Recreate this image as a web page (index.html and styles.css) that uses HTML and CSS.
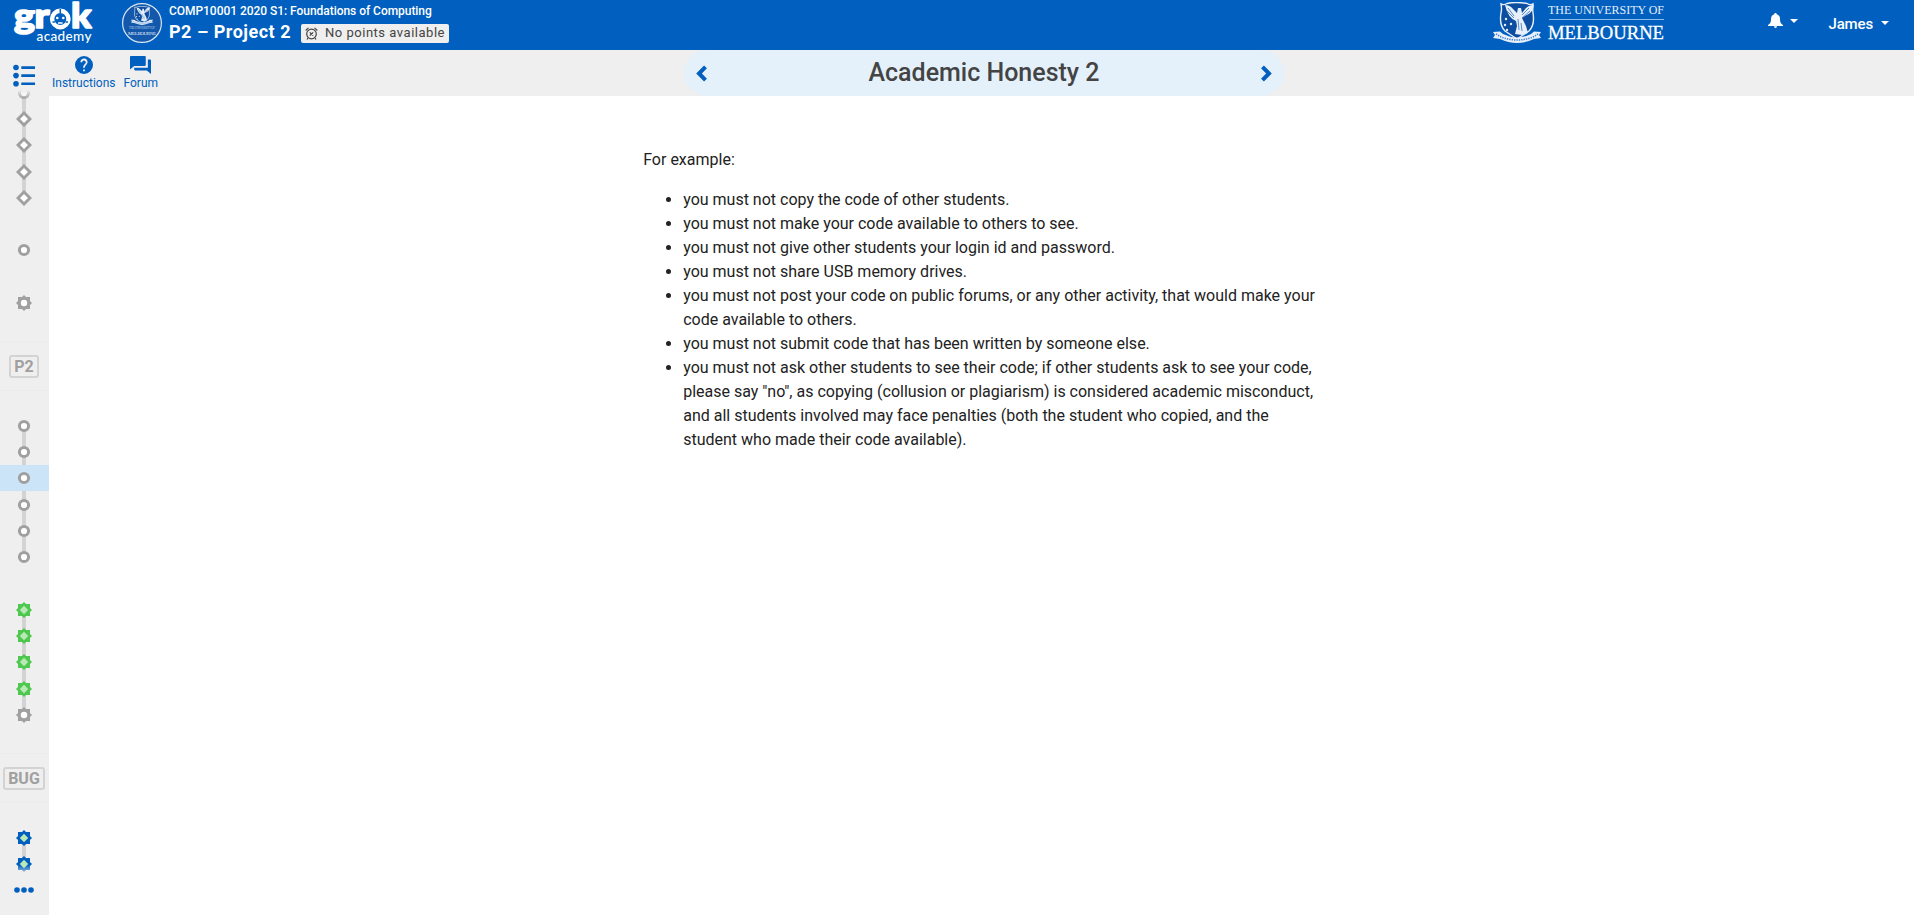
FILE: index.html
```
<!DOCTYPE html>
<html lang="en">
<head>
<meta charset="utf-8">
<title>Academic Honesty 2</title>
<link rel="stylesheet" href="styles.css">
</head>
<body>
<svg class="defs" width="0" height="0">
  <defs>
    <symbol id="circle" viewBox="-8 -8 16 16"><circle r="4.600" fill="#fff" stroke="#a0a0a0" stroke-width="3"/></symbol>
    <symbol id="diamond" viewBox="-8 -8 16 16"><path d="M0-6 6 0 0 6-6 0z" fill="#fff" stroke="#a0a0a0" stroke-width="2.900"/></symbol>
    <symbol id="gear" viewBox="-8 -8 16 16"><path d="M0-8 8 0 0 8-8 0zM-6-6H6V6H-6z" fill="#a0a0a0"/><circle r="3.200" fill="#fff"/></symbol>
    <symbol id="star" viewBox="-8 -8 16 16"><path d="M0-8 8 0 0 8-8 0zM-6-6H6V6H-6z" fill="currentColor"/><path d="M0-4.200 4.200 0 0 4.200-4.200 0z" fill="#b9e9b5"/></symbol>
    <symbol id="crest" viewBox="0 0 48 41">
      <path d="M8 2q3 1.500 6-.5 9-2 20 0 3 2 6 .5-.5 5 0 9 2 12-4 18l-12 8-12-8q-6-6-4-18 1-4 0-9z" fill="#0c4da0" stroke="#e6effa" stroke-width="1.400"/>
      <path d="M12 3q5 0 8 4l4 4 1-5 3 0 1 5 4-5q3-3 8-3-1 8-9 11l-3 2 4 8 2 7-6 2-7-1 2-8-1-5q-8-3-11-16z" fill="#e6effa"/>
      <path d="M15 6l6 8M14 9l7 7M36 6l-7 7M37 9l-8 7M25 17l1 11M28 21l1 8" stroke="#2e70bb" fill="none" stroke-width=".8"/>
      <g fill="#e6effa"><circle cx="13" cy="17" r="1.200"/><circle cx="12" cy="23" r="1.200"/><circle cx="18" cy="22" r="1.200"/><circle cx="14" cy="28" r="1.200"/></g>
      <path d="M0 30l7-.5 3 2.500q14 7 28 0l3-2.500 7 .5-2 3 2 3-7 1q-17 8-34 0l-7-1 2-3z" fill="#e6effa"/>
      <path d="M3 32l5 3q16 6 32 0l5-3" stroke="#3d7ec7" fill="none" stroke-width="1.500" stroke-dasharray="1.300 1.100"/>
    </symbol>
  </defs>
</svg>

<header class="header">
  <svg class="grok" width="90" height="46" viewBox="0 0 90 46">
    <text class="grok-word" x="4" y="28" textLength="21" lengthAdjust="spacingAndGlyphs">g</text>
    <text class="grok-word" x="24.500" y="28" textLength="15" lengthAdjust="spacingAndGlyphs">r</text>
    <text class="grok-word" x="61" y="28" textLength="20.500" lengthAdjust="spacingAndGlyphs">k</text>
    <circle cx="50.300" cy="19" r="8.200" fill="none" stroke="#fff" stroke-width="4.400"/>
    <path d="M50.300 9v4.500M42.500 22h2.500M55.500 22h2.500" stroke="#005fbf" stroke-width="1.500"/>
    <circle cx="47.300" cy="18" r="1.300" fill="#fff"/><circle cx="53.300" cy="18" r="1.300" fill="#fff"/>
    <path d="M48 23h4.600" stroke="#fff" stroke-width="1.500"/>
    <text class="grok-sub" x="26.500" y="40.500" textLength="55">academy</text>
  </svg>
  <svg class="badge" width="42" height="42" viewBox="0 0 42 42">
    <circle cx="21" cy="21" r="19.400" fill="#1358ab" stroke="#d9e6f5" stroke-width="1.200"/>
    <use href="#crest" x="10" y="4" width="22" height="19"/>
    <text x="8" y="27" textLength="26" class="badge-small">THE UNIVERSITY OF</text>
    <text x="7" y="33" textLength="28" class="badge-big">MELBOURNE</text>
  </svg>
  <div class="course">
    <div class="course-name">COMP10001 2020 S1: Foundations of Computing</div>
    <div class="course-row">
      <span class="module">P2 – Project 2</span>
      <span class="points">
        <svg width="13" height="13" viewBox="0 0 13 13" fill="none" stroke="#444" stroke-width="1.200"><circle cx="6.500" cy="7" r="4.800"/><path d="M.7 3.500 3.500.9M12.300 3.500 9.500.9M4.800 5.300l3.400 3.400M8.200 5.300 4.800 8.700M3 11l-1 1.500M10 11l1 1.500"/></svg>
        <span>No points available</span>
      </span>
    </div>
  </div>
  <svg class="unimelb" width="172" height="44" viewBox="0 0 172 44">
    <use href="#crest" x="-1" y="2" width="48" height="41"/>
    <text class="uni-small" x="54" y="14" textLength="116" lengthAdjust="spacingAndGlyphs">THE UNIVERSITY OF</text>
    <path d="M55 19.500h115" stroke="#8fbcea"/>
    <text class="uni-big" x="54" y="38.500" textLength="116" lengthAdjust="spacingAndGlyphs">MELBOURNE</text>
  </svg>
  <div class="bell">
    <svg width="15" height="15" viewBox="0 0 15 15" fill="#fff"><path d="M7.500 0c.7 0 1.200.5 1.200 1.200C11 2 12 3.600 12 6c0 3.500.8 4.800 3 6v1H0v-1c2.200-1.200 3-2.500 3-6 0-2.400 1-4 3.300-4.800C6.300.5 6.800 0 7.500 0zM6 13.300h3c0 1-.6 1.700-1.500 1.700S6 14.300 6 13.300z"/></svg>
    <i class="caret"></i>
  </div>
  <div class="user">James<i class="caret"></i></div>
</header>

<div class="shell">
  <nav class="rail">
    <svg class="toc" width="23" height="23" viewBox="0 0 23 23" fill="#005fbf"><circle cx="3" cy="3.500" r="2.800"/><circle cx="3" cy="11.600" r="2.800"/><circle cx="3" cy="19.700" r="2.800"/><path d="M8.300 2.200H22v2.700H8.300zM8.300 10.300H22V13H8.300zM8.300 18.400H22v2.700H8.300z"/></svg>
    <div class="steps">
      <div class="group">
        <div class="step"><svg><use href="#circle"/></svg></div>
        <div class="step"><svg><use href="#diamond"/></svg></div>
        <div class="step"><svg><use href="#diamond"/></svg></div>
        <div class="step"><svg><use href="#diamond"/></svg></div>
        <div class="step"><svg><use href="#diamond"/></svg></div>
      </div>
      <div class="group"><div class="step"><svg><use href="#circle"/></svg></div></div>
      <div class="group"><div class="step"><svg><use href="#gear"/></svg></div></div>
      <div class="section"><span>P2</span></div>
      <div class="group">
        <div class="step"><svg><use href="#circle"/></svg></div>
        <div class="step"><svg><use href="#circle"/></svg></div>
        <div class="step current"><svg><use href="#circle"/></svg></div>
        <div class="step"><svg><use href="#circle"/></svg></div>
        <div class="step"><svg><use href="#circle"/></svg></div>
        <div class="step"><svg><use href="#circle"/></svg></div>
      </div>
      <div class="group">
        <div class="step done"><svg><use href="#star"/></svg></div>
        <div class="step done"><svg><use href="#star"/></svg></div>
        <div class="step done"><svg><use href="#star"/></svg></div>
        <div class="step done"><svg><use href="#star"/></svg></div>
        <div class="step"><svg><use href="#gear"/></svg></div>
      </div>
      <div class="section"><span>BUG</span></div>
      <div class="group">
        <div class="step new"><svg><use href="#star"/></svg></div>
        <div class="step new"><svg><use href="#star"/></svg></div>
      </div>
    </div>
    <svg class="more" width="20" height="6" viewBox="0 0 20 6" fill="#005fbf"><circle cx="3" cy="3" r="2.800"/><circle cx="10" cy="3" r="2.800"/><circle cx="17" cy="3" r="2.800"/></svg>
  </nav>

  <div class="page">
    <div class="toolbar">
      <div class="tools">
        <a class="tool">
          <svg width="18" height="18" viewBox="2 2 20 20" fill="#005fbf"><path d="M12 2a10 10 0 1 0 0 20 10 10 0 0 0 0-20zm1 17h-2v-2h2zm2.070-7.750-.9.920C13.450 12.900 13 13.500 13 15h-2v-.5c0-1.100.45-2.100 1.170-2.830l1.240-1.260A2 2 0 1 0 10 9H8a4 4 0 1 1 7.070 2.250z"/></svg>
          <span>Instructions</span>
        </a>
        <a class="tool">
          <svg width="21" height="18" viewBox="2 2 20 20" preserveAspectRatio="none" fill="#005fbf"><path d="M21 6h-2v9H6v2c0 .55.45 1 1 1h11l4 4V7c0-.55-.45-1-1-1zm-4 6V3c0-.55-.45-1-1-1H3c-.55 0-1 .45-1 1v14l4-4h10c.55 0 1-.45 1-1z"/></svg>
          <span>Forum</span>
        </a>
      </div>
      <div class="pager">
        <svg width="11" height="17" viewBox="0 0 11 17" fill="none" stroke="#005fbf" stroke-width="4"><path d="M9.500 1.800 3 8.500l6.500 6.700"/></svg>
        <h1>Academic Honesty 2</h1>
        <svg width="11" height="17" viewBox="0 0 11 17" fill="none" stroke="#005fbf" stroke-width="4"><path d="M1.500 1.800 8 8.500l-6.500 6.700"/></svg>
      </div>
    </div>
    <main class="content">
      <p>For example:</p>
      <ul>
        <li>you must not copy the code of other students.</li>
        <li>you must not make your code available to others to see.</li>
        <li>you must not give other students your login id and password.</li>
        <li>you must not share USB memory drives.</li>
        <li>you must not post your code on public forums, or any other activity, that would make your code available to others.</li>
        <li>you must not submit code that has been written by someone else.</li>
        <li>you must not ask other students to see their code; if other students ask to see your code, please say "no", as copying (collusion or plagiarism) is considered academic misconduct, and all students involved may face penalties (both the student who copied, and the student who made their code available).</li>
      </ul>
    </main>
  </div>
</div>
</body>
</html>
```
FILE: styles.css
```
* { box-sizing: border-box; }
body { margin: 0; height: 915px; overflow: hidden; background: #fff; color: #222; font: 16px/24px Roboto, sans-serif; }
svg { display: block; flex: none; }
.defs { position: absolute; }

.header { display: flex; align-items: flex-start; height: 50px; padding-left: 10px; background: #005fbf; color: #fff; }
.grok { overflow: visible; }
.grok-word { font: 900 35px Lato, sans-serif; fill: #fff; stroke: #fff; stroke-width: 1.600; stroke-linejoin: round; }
.grok-sub { font: 500 13.500px Lato, sans-serif; fill: #fff; }
.badge { margin: 2px 0 0 21px; }
.badge-small { font: 3px "Liberation Serif", serif; fill: #b5cdea; }
.badge-big { font: 5px "Liberation Serif", serif; fill: #e6effa; }
.course { width: 500px; margin-left: 6px; padding-top: 3px; }
.course-name { font-size: 12px; line-height: 16px; font-weight: 500; letter-spacing: -.04px; white-space: nowrap; }
.course-row { display: flex; align-items: center; margin-top: 2px; height: 22px; }
.module { font-size: 18px; font-weight: 700; letter-spacing: .5px; white-space: nowrap; }
.points { display: flex; align-items: center; gap: 7px; margin: 2px 0 0 10px; height: 19px; padding: 0 4px; border-radius: 2px; background: #efefef; color: #444; font-size: 13px; letter-spacing: .52px; white-space: nowrap; }
.unimelb { margin-left: auto; overflow: visible; }
.uni-small { font: 13px "Liberation Serif", serif; fill: #e6effa; }
.uni-big { font: 19px "Liberation Serif", serif; fill: #fff; stroke: #fff; stroke-width: .3; }
.bell { display: flex; align-items: center; gap: 7px; margin: 12px 0 0 102px; height: 16px; }
.caret { display: block; border: 4px solid transparent; border-top-color: #fff; border-bottom: 0; }
.bell .caret { margin: 2px 1px 0 0; }
.user { display: flex; align-items: center; gap: 8px; margin: 12px 25px 0 30px; font-size: 15px; font-weight: 500; line-height: 24px; letter-spacing: -.15px; }
.user .caret { margin-bottom: 3px; }

.shell { display: flex; height: 865px; }
.rail { display: flex; flex-direction: column; align-items: center; width: 49px; background: #efefef; }
.toc { margin-top: 14px; }
.steps { position: relative; width: 49px; height: 793px; margin-top: 2px; overflow: hidden; }
.steps::before, .steps::after { content: ""; position: absolute; left: 0; width: 100%; height: 13px; }
.steps::before { top: 0; height: 10px; background: linear-gradient(#efefef 10%, #efefef00); }
.steps::after { bottom: 4px; background: linear-gradient(#efefef00, #efefef 85%); }
.group { margin-bottom: 26.200px; }
.group:first-child { margin-top: -9.500px; }
.step { display: flex; justify-content: center; align-items: center; height: 26.300px; background: linear-gradient(#d3d3d3, #d3d3d3) 22px 0 / 4px 100% no-repeat; }
.step:first-child { background-position: 22px 100%; background-size: 4px 50%; }
.step:last-child { background-size: 4px 50%; }
.step:only-child { background: none; }
.step.current { background: #cce4f8; }
.step svg { width: 16px; height: 16px; margin-right: 1px; }
.done { color: #50c850; }
.new { color: #005fbf; }
.section { display: flex; justify-content: center; align-items: center; height: 50px; margin: -1px 0 21.400px; padding-right: 1px; border: solid #ebebeb; border-width: 1px 0; }
.section span { padding: 0 3.500px; border: 2px solid #d3d3d3; border-radius: 3px; color: #a0a0a0; font-size: 16px; font-weight: 700; line-height: 19px; }
.more { margin: 5px 1px 0 0; }

.page { flex: 1; }
.toolbar { display: grid; grid-template-columns: 635px 600px 1fr; height: 46px; background: #efefef; }
.tools { display: flex; gap: 8px; padding: 6px 0 0 3px; }
.tool { display: flex; flex-direction: column; align-items: center; gap: 2px; color: #005fbf; font-size: 12px; line-height: 14px; }
.pager { display: flex; align-items: center; justify-content: space-between; padding: 0 12px; border-radius: 23px; background: #e4f1fb; }
.pager h1 { margin: 0; color: #444; font-size: 25px; font-weight: 500; }
.content { width: 674px; margin: 52px 0 0 594.200px; }
.content p { margin: 0 0 16px; }
.content ul { margin: 0; padding-left: 40px; }
```
